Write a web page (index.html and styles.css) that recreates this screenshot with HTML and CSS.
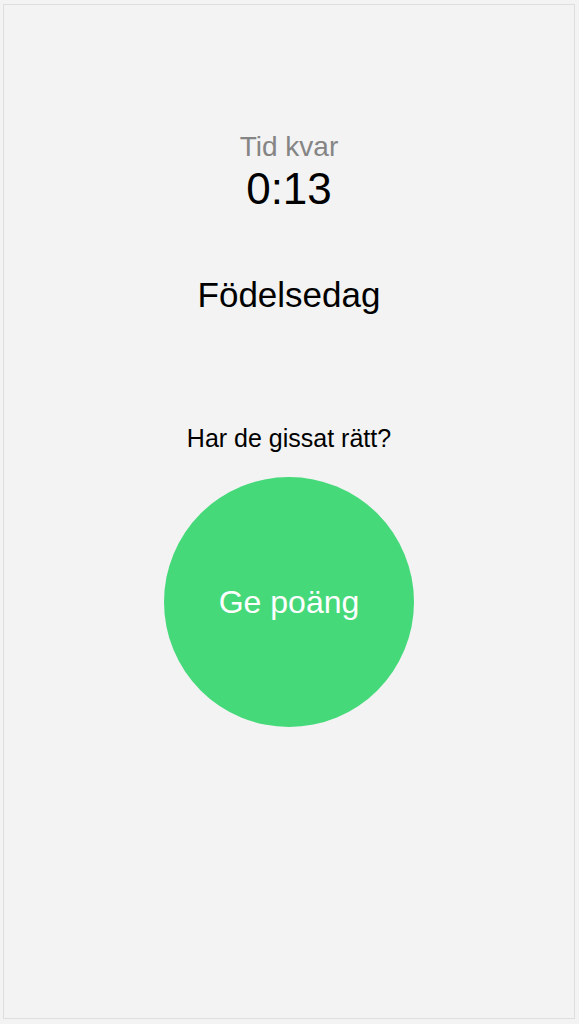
FILE: index.html
```html
<!DOCTYPE html>
<html lang="sv">
<head>
<meta charset="utf-8">
<title>Tid kvar</title>
<link rel="stylesheet" href="styles.css">
</head>
<body>
<div class="frame">
  <div class="timer">
    <div class="timer-label">Tid kvar</div>
    <div class="timer-value">0:13</div>
  </div>
  <div class="word">Födelsedag</div>
  <div class="question">Har de gissat rätt?</div>
  <button class="score-btn">Ge poäng</button>
</div>
</body>
</html>
```

FILE: styles.css
```css
html, body {
  margin: 0;
  padding: 0;
  background: #f3f3f3;
}
body {
  font-family: "Liberation Sans", Arial, Helvetica, sans-serif;
  color: #000;
}
.frame {
  box-sizing: border-box;
  margin: 4px 0 0 3px;
  width: 572px;
  height: 1015px;
  border: 1px solid #dedede;
  background: #f3f3f3;
  display: flex;
  flex-direction: column;
  align-items: center;
  padding-top: 126px;
}
.timer {
  display: flex;
  flex-direction: column;
  align-items: center;
}
.timer-label {
  font-size: 28px;
  line-height: 32px;
  color: #858585;
}
.timer-value {
  font-size: 44px;
  line-height: 51px;
}
.word {
  margin-top: 61px;
  font-size: 35px;
  line-height: 40px;
}
.question {
  margin-top: 109px;
  font-size: 25px;
  line-height: 29px;
}
.score-btn {
  margin-top: 24px;
  width: 250px;
  height: 250px;
  border-radius: 50%;
  border: none;
  padding: 0;
  background: #46d97a;
  color: #fff;
  font-family: "Liberation Sans", Arial, Helvetica, sans-serif;
  font-size: 32px;
  line-height: 37px;
  display: flex;
  align-items: center;
  justify-content: center;
}
```
